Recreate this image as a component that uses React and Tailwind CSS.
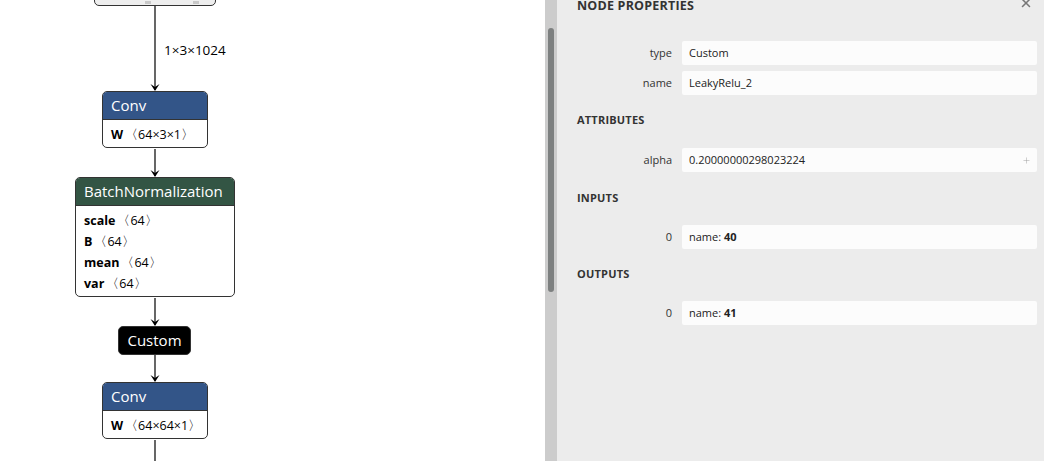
import React from 'react';
import { X, Plus } from 'lucide-react';

const font = { fontFamily: '"Open Sans", "Noto Sans", sans-serif' };

function Node({ x, y, w, title, color, attrs }) {
  return (
    <div
      className="absolute rounded-[5px] border border-[#333] bg-white overflow-hidden"
      style={{ left: x, top: y, width: w }}
    >
      <div className={`h-[28px] flex items-center pl-[8px] text-[15px] text-white border-b border-[#333] ${color}`}>
        {title}
      </div>
      <div className="pt-[5px] pb-[1px] pl-[8px]">
        {attrs.map(([k, v]) => (
          <div key={k} className="h-[21px] flex items-center text-[12.5px] text-black">
            <span className="font-bold">{k}</span>
            <span className="ml-[2px]">〈{v}〉</span>
          </div>
        ))}
      </div>
    </div>
  );
}

function Graph() {
  const edges = [
    [6, 91],
    [149, 177],
    [298, 326],
    [355, 382],
    [440, 470],
  ];
  return (
    <div className="relative w-[545px] h-full bg-white overflow-hidden">
      <svg className="absolute inset-0" width="545" height="461">
        {edges.map(([a, b], i) => (
          <g key={i}>
            <line x1="155" y1={a} x2="155" y2={b - 1} stroke="#000" strokeWidth="1.2" />
            {b < 461 && <path d={`M150.5 ${b - 7} L155 ${b} L159.5 ${b - 7} L155 ${b - 4} Z`} fill="#000" />}
          </g>
        ))}
      </svg>
      <div className="absolute left-[94px] top-[-30px] w-[122px] h-[36px] rounded-[5px] border border-[#333] bg-[#eeeeee]">
        <div className="absolute left-[50px] bottom-[1px] w-[6px] h-[3px] bg-[#c8c8c8]" />
        <div className="absolute left-[98px] bottom-[1px] w-[6px] h-[3px] bg-[#c8c8c8]" />
      </div>
      <div className="absolute left-[164px] top-[40px] text-[13.5px] text-black">1×3×1024</div>
      <Node x={102} y={91} w={106} title="Conv" color="bg-[#335588]" attrs={[['W', '64×3×1']]} />
      <Node
        x={75}
        y={177}
        w={160}
        title="BatchNormalization"
        color="bg-[#335544]"
        attrs={[['scale', '64'], ['B', '64'], ['mean', '64'], ['var', '64']]}
      />
      <div className="absolute left-[118px] top-[326px] w-[73px] h-[29px] rounded-[5px] border border-[#333] bg-black text-white text-[15px] flex items-center justify-center">
        Custom
      </div>
      <Node x={102} y={382} w={106} title="Conv" color="bg-[#335588]" attrs={[['W', '64×64×1']]} />
    </div>
  );
}

function Row({ label, children, plus }) {
  return (
    <div className="flex items-center h-[24px]">
      <div className="w-[105px] pr-[10px] text-right text-[11px] text-[#333]">{label}</div>
      <div className="flex-1 h-full rounded-[2px] bg-[#fcfcfc] flex items-center pl-[7px] pr-[6px] text-[11px] text-[#222]">
        <span className="flex-1">{children}</span>
        {plus && <Plus size={9} strokeWidth={1.2} className="text-[#999]" />}
      </div>
    </div>
  );
}

function Section({ children, mt, size = 'text-[11px]' }) {
  return <div className={`h-4 leading-4 font-bold text-[#333] tracking-[0.2px] ${size} ${mt}`}>{children}</div>;
}

function Panel() {
  return (
    <div className="relative flex-1 h-full bg-[#ececec] pl-[20px] pr-[7px] overflow-hidden">
      <X size={14} strokeWidth={2.6} className="absolute right-[11px] top-[-4px] text-[#777]" />
      <Section mt="mt-[-2px]" size="text-[12.5px]">NODE PROPERTIES</Section>
      <div className="mt-[27px]">
        <Row label="type">Custom</Row>
      </div>
      <div className="mt-[6px]">
        <Row label="name">LeakyRelu_2</Row>
      </div>
      <Section mt="mt-[17px]">ATTRIBUTES</Section>
      <div className="mt-[20px]">
        <Row label="alpha" plus>0.20000000298023224</Row>
      </div>
      <Section mt="mt-[18px]">INPUTS</Section>
      <div className="mt-[19px]">
        <Row label="0">
          name: <span className="font-bold">40</span>
        </Row>
      </div>
      <Section mt="mt-[17px]">OUTPUTS</Section>
      <div className="mt-[19px]">
        <Row label="0">
          name: <span className="font-bold">41</span>
        </Row>
      </div>
    </div>
  );
}

export default function App() {
  return (
    <div className="w-[1044px] h-[461px] flex overflow-hidden" style={font}>
      <Graph />
      <div className="w-[12px] h-full bg-[#cccccc] flex justify-center pt-[28px]">
        <div className="w-[6px] h-[264px] rounded-[3px] bg-[#7d8080]" />
      </div>
      <Panel />
    </div>
  );
}
